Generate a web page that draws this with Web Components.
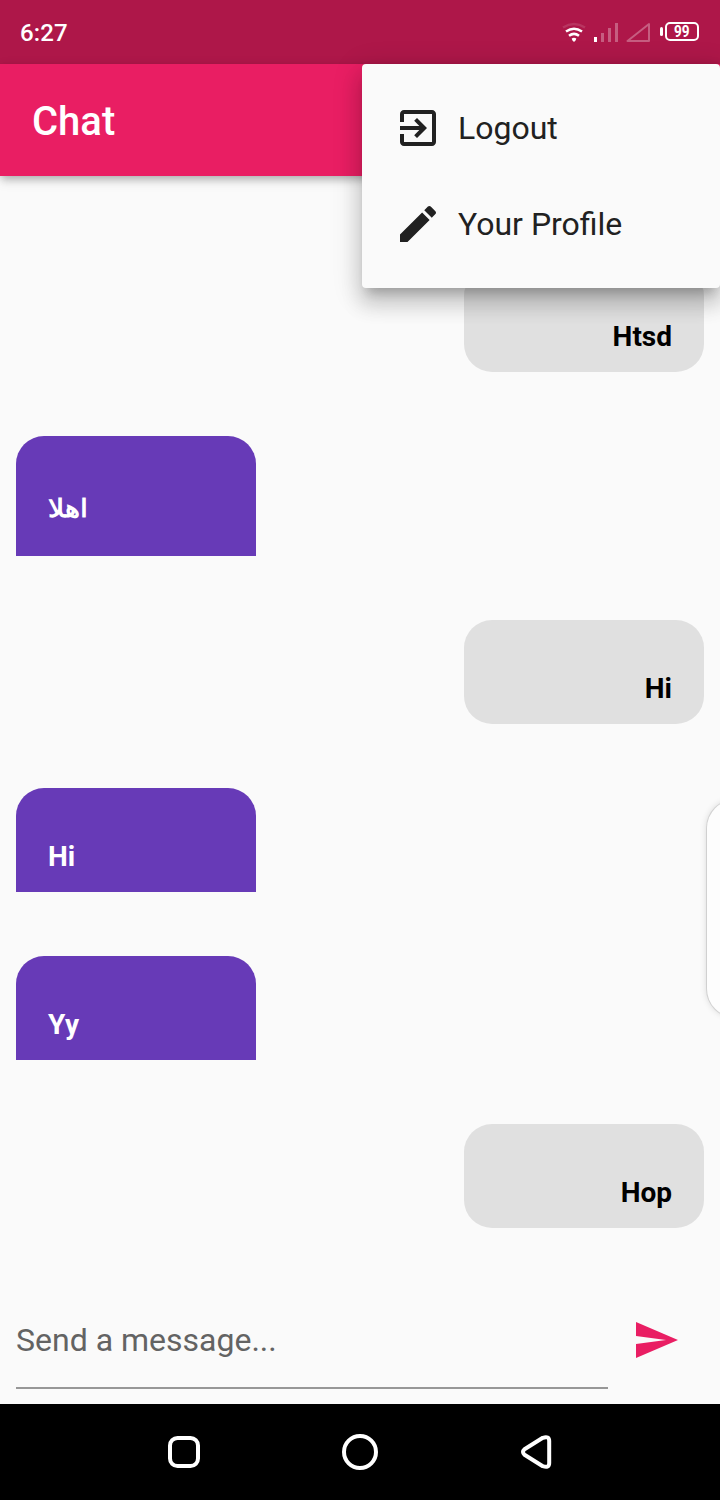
<!DOCTYPE html>
<html lang="en">
<head>
<meta charset="utf-8">
<title>Chat</title>
<style>
html, body { margin: 0; }
body { width: 720px; height: 1500px; overflow: hidden; background: #fafafa; font-family: Roboto, "Noto Sans", sans-serif; }
</style>
</head>
<body>
<chat-screen></chat-screen>
<script>
function define(name, markup) {
  const template = document.createElement('template');
  template.innerHTML = markup;
  customElements.define(name, class extends HTMLElement {
    constructor() {
      super();
      this.attachShadow({ mode: 'open' }).append(template.content.cloneNode(true));
    }
  });
}

define('status-bar', `
<style>
:host { display: flex; justify-content: space-between; align-items: center; box-sizing: border-box; height: 64px; padding: 0 21px 0 20px; background: #ae1749; color: #fff; }
time { font-size: 24px; font-weight: 500; line-height: 28px; letter-spacing: .1px; padding-top: 2px; }
.icons { display: flex; align-items: center; height: 64px; }
svg { display: block; }
.battery { display: flex; align-items: center; margin-left: 9px; margin-top: -2px; }
.tip { width: 3px; height: 9px; border-radius: 1.5px; background: #fff; margin-right: 2px; }
.level { box-sizing: border-box; width: 34px; height: 19px; border: 2px solid #fff; border-radius: 5px; display: flex; align-items: center; justify-content: center; }
.level span { font-size: 17px; font-weight: 700; line-height: 15px; transform: scaleX(.8); }
</style>
<time>6:27</time>
<div class="icons">
  <svg width="89" height="64" viewBox="562 0 89 64">
    <g fill="none" stroke="#fff" stroke-width="2.5">
      <path d="M563 27.500Q574 20.500 585 27.500" opacity=".13"/>
      <path d="M566 31.500Q574 26 582 31.500"/>
      <path d="M569 35.800Q574 32 579 35.800"/>
    </g>
    <path d="M571.700 38.500Q574 37 576.300 38.500Q576.300 40 574 42Q571.700 40 571.700 38.500Z" fill="#fff"/>
    <rect x="594" y="37" width="3" height="5" fill="#fff"/>
    <g fill="#fff" opacity=".3">
      <rect x="601" y="33" width="3" height="9"/>
      <rect x="608" y="28" width="3" height="14"/>
      <rect x="615" y="23" width="3" height="19"/>
    </g>
    <path d="M627.500 41L649 24V41Z" fill="none" stroke="#fff" stroke-width="2" stroke-linejoin="round" opacity=".3"/>
  </svg>
  <div class="battery"><div class="tip"></div><div class="level"><span>99</span></div></div>
</div>`);

define('app-bar', `
<style>
:host { display: flex; align-items: center; box-sizing: border-box; height: 112px; padding: 0 32px; background: #e91e63; color: #fff; position: relative; z-index: 1; box-shadow: 0 4px 8px -2px rgba(0,0,0,.2), 0 8px 10px rgba(0,0,0,.06), 0 2px 10px rgba(0,0,0,.12); }
h1 { margin: 0; font-size: 40px; font-weight: 500; line-height: 48px; padding-top: 4px; }
</style>
<h1><slot></slot></h1>`);

define('popup-menu', `
<style>
:host { display: block; box-sizing: border-box; position: absolute; z-index: 2; right: 0; top: 64px; width: 358px; height: 224px; padding: 16px 0; border-radius: 4px; background: #fafafa; box-shadow: 0 10px 10px -6px rgba(0,0,0,.2), 0 16px 20px 2px rgba(0,0,0,.14), 0 6px 28px 4px rgba(0,0,0,.12); }
</style>
<slot></slot>`);

define('menu-item', `
<style>
:host { display: flex; align-items: center; gap: 16px; height: 96px; padding: 0 32px; color: #212121; font-size: 32px; line-height: 38px; }
::slotted(svg) { display: block; width: 48px; height: 48px; fill: currentColor; }
</style>
<slot name="icon"></slot><span><slot></slot></span>`);

define('message-list', `
<style>
:host { display: flex; flex-direction: column; justify-content: flex-end; gap: 64px; box-sizing: border-box; height: 1100px; padding: 32px 16px 48px; overflow: hidden; }
</style>
<slot></slot>`);

define('chat-bubble', `
<style>
:host { display: flex; flex-direction: column; justify-content: flex-end; align-items: flex-start; align-self: flex-start; box-sizing: border-box; flex: none; width: 240px; height: 104px; padding: 20px 32px 19px; border-radius: 28px 28px 0 0; background: #673ab7; color: #fff; font-size: 28px; font-weight: 700; line-height: 32px; }
:host([mine]) { align-items: flex-end; align-self: flex-end; border-radius: 28px; background: #e0e0e0; color: #000; }
:host([lang=ar]) { height: 120px; padding-bottom: 23px; line-height: 48px; }
:host([lang=ar]) span { transform: scaleY(.88); }
</style>
<span><slot></slot></span>`);

define('message-input', `
<style>
:host { display: flex; align-items: flex-start; box-sizing: border-box; height: 128px; padding: 0 16px; }
.field { box-sizing: border-box; width: 592px; height: 113px; padding-top: 45px; border-bottom: 2px solid #979797; color: #636363; font-size: 32px; line-height: 38px; }
svg { display: block; margin: 40px 0 0 24px; fill: #e91e63; }
</style>
<div class="field">Send a message...</div>
<svg width="48" height="48" viewBox="0 0 24 24"><path d="M2.010 21L23 12 2.010 3 2 10l15 2-15 2z"/></svg>`);

define('edge-handle', `
<style>
:host { display: block; box-sizing: border-box; position: absolute; left: 707px; top: 800px; width: 56px; height: 217px; border-radius: 28px; background: #fdfdfd; box-shadow: 0 0 0 1px rgba(0,0,0,.1), 0 0 7px rgba(0,0,0,.16); }
</style>`);

define('nav-bar', `
<style>
:host { display: flex; justify-content: space-around; align-items: center; box-sizing: border-box; height: 96px; padding: 0 96px; background: #000; }
svg { display: block; fill: none; stroke: #fff; stroke-width: 4; stroke-linejoin: round; }
</style>
<svg width="40" height="40"><rect x="6" y="6" width="28" height="28" rx="7.500"/></svg>
<svg width="40" height="40"><circle cx="20" cy="20" r="16"/></svg>
<svg width="40" height="40"><path d="M8.500 17.300L26.800 5.800Q33.200 3.600 33.200 9V31Q33.200 36.400 26.800 34.200L8.500 22.700Q5.500 20 8.500 17.300Z"/></svg>`);

define('chat-screen', `
<style>
:host { display: flex; flex-direction: column; position: relative; width: 720px; height: 1500px; overflow: hidden; background: #fafafa; }
</style>
<status-bar></status-bar>
<app-bar>Chat</app-bar>
<message-list>
  <chat-bubble mine>Htsd</chat-bubble>
  <chat-bubble lang="ar">اهلا</chat-bubble>
  <chat-bubble mine>Hi</chat-bubble>
  <chat-bubble>Hi</chat-bubble>
  <chat-bubble>Yy</chat-bubble>
  <chat-bubble mine>Hop</chat-bubble>
</message-list>
<message-input></message-input>
<nav-bar></nav-bar>
<edge-handle></edge-handle>
<popup-menu>
  <menu-item><svg slot="icon" viewBox="0 0 24 24"><path d="M10.090 15.590L11.500 17l5-5-5-5-1.410 1.410L12.670 11H3v2h9.670l-2.580 2.590zM19 3H5c-1.110 0-2 .9-2 2v4h2V5h14v14H5v-4H3v4c0 1.100.89 2 2 2h14c1.100 0 2-.9 2-2V5c0-1.100-.9-2-2-2z"/></svg>Logout</menu-item>
  <menu-item><svg slot="icon" viewBox="0 0 24 24"><path d="M3 17.250V21h3.750L17.810 9.940l-3.750-3.750L3 17.250zM20.710 7.040c.39-.39.39-1.020 0-1.410l-2.340-2.340c-.39-.39-1.020-.39-1.410 0l-1.830 1.830 3.750 3.750 1.830-1.830z"/></svg>Your Profile</menu-item>
</popup-menu>`);
</script>
</body>
</html>
